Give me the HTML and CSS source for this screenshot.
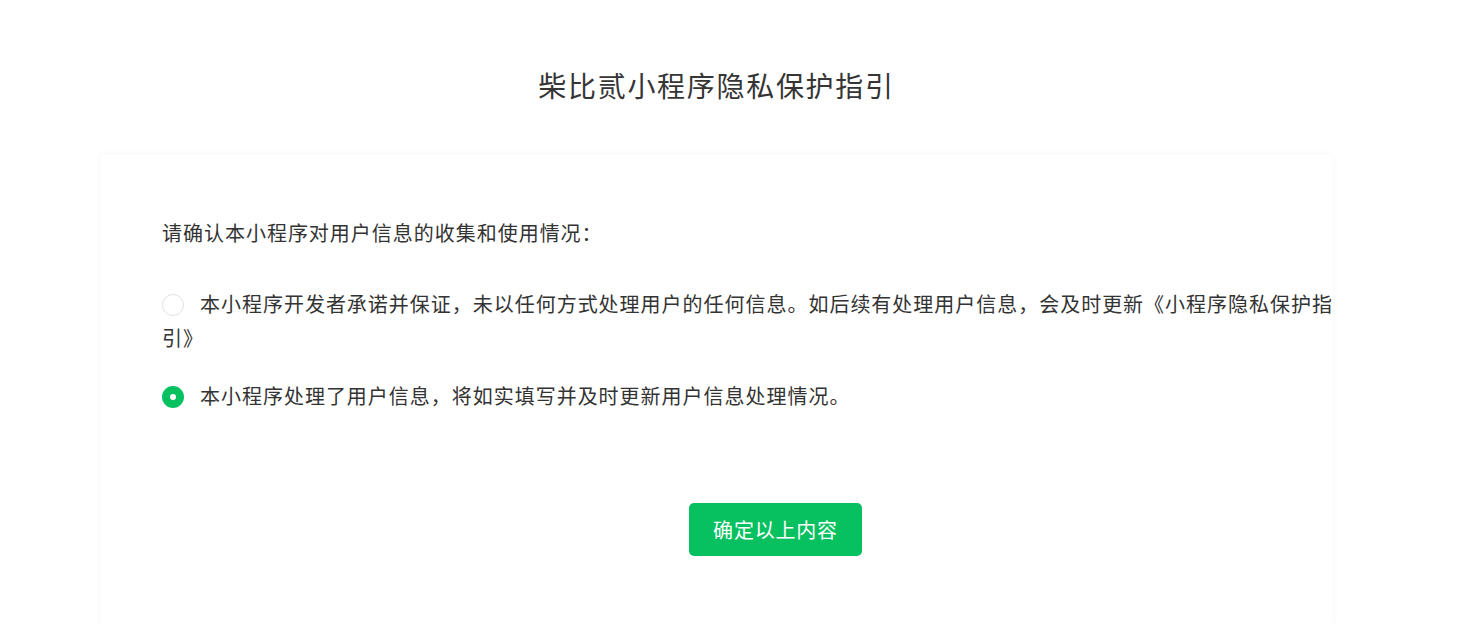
FILE: index.html
```html
<!DOCTYPE html>
<html lang="zh-CN">
<head>
    <meta charset="UTF-8">
    <title>柴比贰小程序隐私保护指引</title>
    <link rel="stylesheet" href="styles.css">
</head>
<body>
    <div class="page">
        <h1 class="title">柴比贰小程序隐私保护指引</h1>

        <div class="card">
            <p class="intro">请确认本小程序对用户信息的收集和使用情况：</p>

            <div class="options">
                <label class="option">
                    <span class="radio"></span>本小程序开发者承诺并保证，未以任何方式处理用户的任何信息。如后续有处理用户信息，会及时更新《小程序隐私保护指引》
                </label>
                <label class="option">
                    <span class="radio checked"></span>本小程序处理了用户信息，将如实填写并及时更新用户信息处理情况。
                </label>
            </div>

            <div class="actions">
                <a href="#" class="confirm-button">确定以上内容</a>
            </div>
        </div>
    </div>
</body>
</html>
```

FILE: styles.css
```css
body {
    margin: 0;
    font-family: "Noto Sans CJK SC", "Noto Sans", sans-serif;
    color: #333;
    background-color: #fff;
}
.page {
    margin: 0 146px 0 100px;
}
.title {
    margin: 0;
    padding: 65px 0 50px;
    font-size: 28px;
    font-weight: normal;
    line-height: 40px;
    letter-spacing: 1.7px;
    text-align: center;
    color: #353535;
}
.card {
    box-sizing: border-box;
    height: 472px;
    padding: 61px 0 0 62px;
    border-radius: 6px 6px 0 0;
    box-shadow: 0 -1px 8px rgba(0, 0, 0, 0.035);
    font-size: 20px;
    line-height: 34px;
    letter-spacing: 0.98px;
}
.intro {
    margin: 0 0 37px;
}
.options {
    margin-right: -10px;
}
.option {
    display: block;
    margin-bottom: 24px;
}
.radio {
    display: inline-block;
    box-sizing: border-box;
    width: 22px;
    height: 22px;
    margin: 0 16px 0 0;
    border: 1px solid #e3e3e3;
    border-radius: 50%;
    vertical-align: -4px;
    position: relative;
}
.radio.checked {
    border: none;
    background-color: #07c160;
}
.radio.checked::after {
    content: "";
    position: absolute;
    left: 8px;
    top: 8px;
    width: 6px;
    height: 6px;
    border-radius: 50%;
    background-color: #fff;
}
.actions {
    display: flex;
    justify-content: center;
    padding: 66px 0 0 56px;
}
.confirm-button {
    display: inline-block;
    width: 173px;
    height: 53px;
    line-height: 53px;
    border-radius: 5px;
    background-color: #07c160;
    color: #fff;
    text-align: center;
    text-decoration: none;
    font-size: 20px;
    letter-spacing: 0.8px;
}
```
